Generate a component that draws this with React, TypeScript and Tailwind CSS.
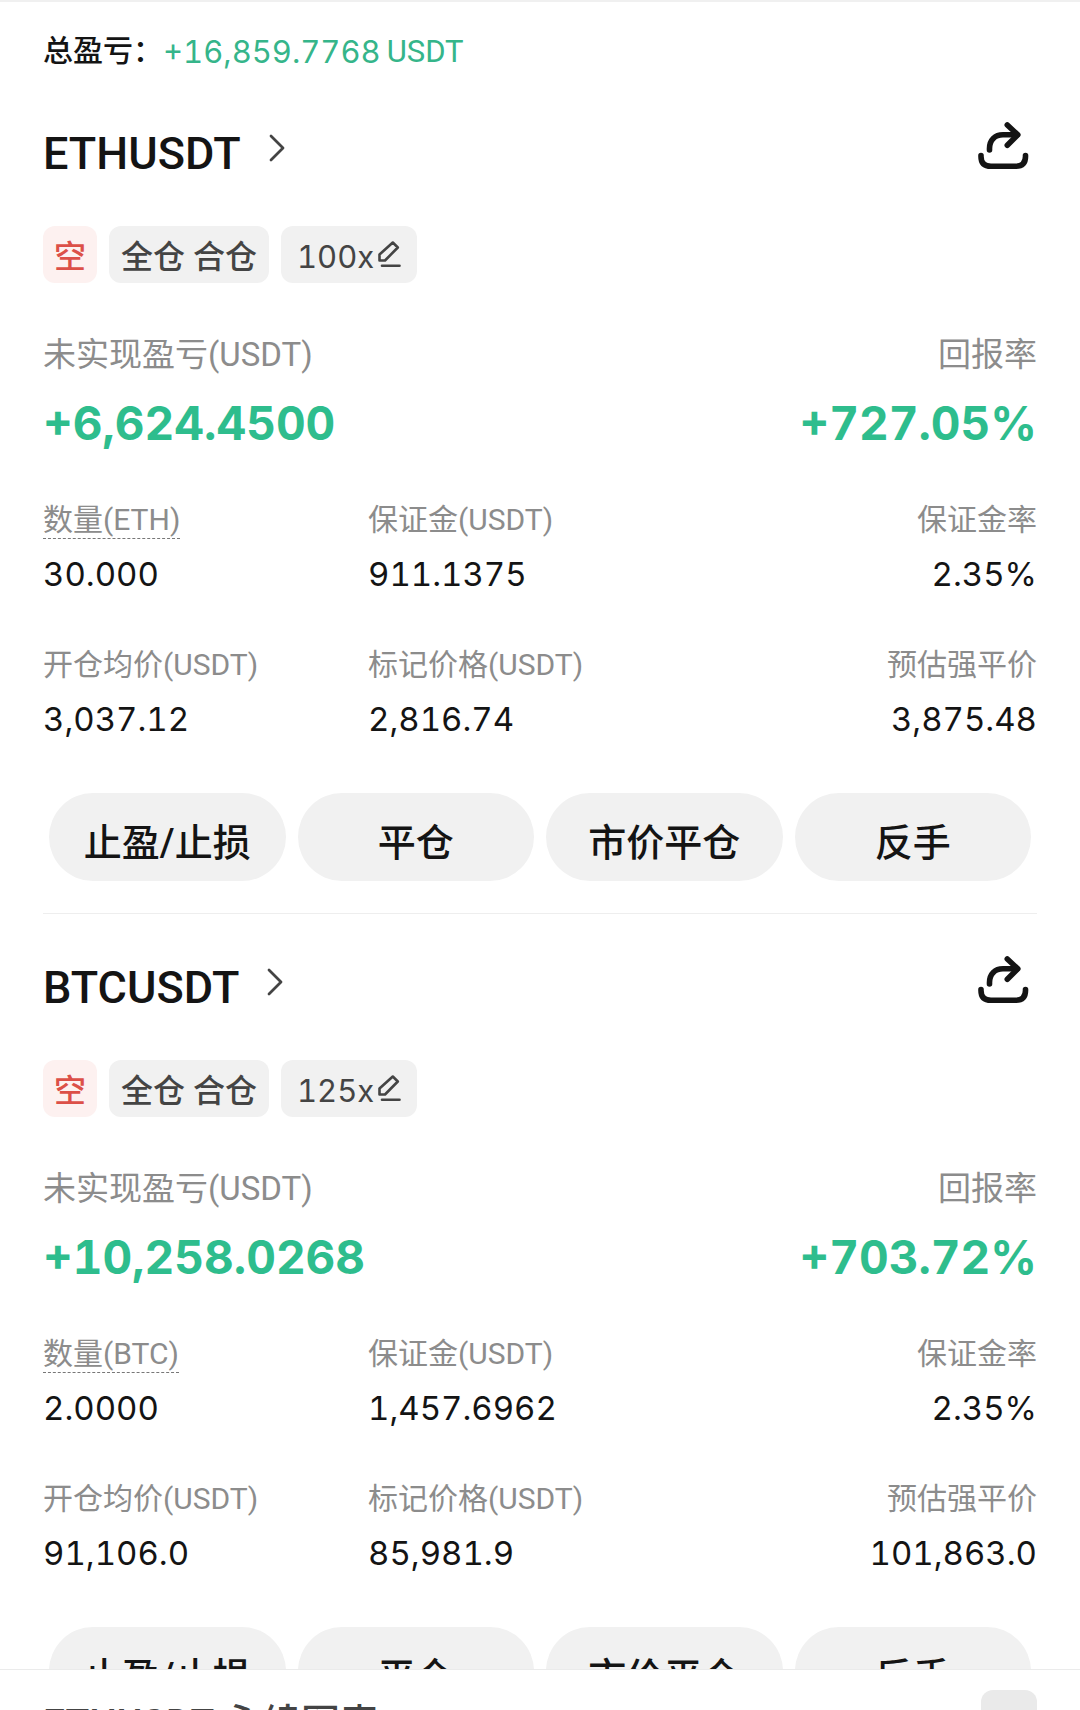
import clsx from "clsx"

interface Position {
    symbol: string
    coin: string
    leverage: string
    pnl: string
    roi: string
    amount: string
    margin: string
    marginRate: string
    entryPrice: string
    markPrice: string
    liqPrice: string
}

const positions: Position[] = [
    {
        symbol: "ETHUSDT",
        coin: "ETH",
        leverage: "100x",
        pnl: "+6,624.4500",
        roi: "+727.05%",
        amount: "30.000",
        margin: "911.1375",
        marginRate: "2.35%",
        entryPrice: "3,037.12",
        markPrice: "2,816.74",
        liqPrice: "3,875.48",
    },
    {
        symbol: "BTCUSDT",
        coin: "BTC",
        leverage: "125x",
        pnl: "+10,258.0268",
        roi: "+703.72%",
        amount: "2.0000",
        margin: "1,457.6962",
        marginRate: "2.35%",
        entryPrice: "91,106.0",
        markPrice: "85,981.9",
        liqPrice: "101,863.0",
    },
]

const actions = ["止盈/止损", "平仓", "市价平仓", "反手"]

const numFont = "font-['Inter','Noto_Sans_CJK_SC',sans-serif] tabular-nums"

function ShareIcon() {
    return (
        <svg viewBox="0 0 51 48" className="h-12 w-[51px]" fill="none" stroke="currentColor" strokeWidth="5.6" strokeLinecap="round" strokeLinejoin="round">
            <path d="M3 33.5v1c0 6.5 3.5 9.8 10 9.8h24.5c6.5 0 10-3.3 10-9.8v-1" />
            <path d="M11.5 28v-1.5c0-8.5 5.5-13.7 13.500-13.7h14" />
            <path d="M29.300 3l10.500 9.800-10.500 10.400" />
        </svg>
    )
}

function ChevronIcon() {
    return (
        <svg viewBox="0 0 16 28" className="h-7 w-4" fill="none" stroke="currentColor" strokeWidth="2.8" strokeLinecap="round" strokeLinejoin="round">
            <path d="M2 2l12 12L2 26" />
        </svg>
    )
}

function EditIcon() {
    return (
        <svg viewBox="0 0 23 27" className="h-[27px] w-[23px]" fill="none" stroke="currentColor" strokeWidth="2.6" strokeLinecap="round" strokeLinejoin="round">
            <path d="M1.500 19.500v-6L14.800 1.500l5 5L7 19.500z" />
            <path d="M4 24.800h17.500" />
        </svg>
    )
}

interface FieldProps {
    label: string
    value: string
    dashed?: boolean
    right?: boolean
}

function Field({ label, value, dashed, right }: FieldProps) {
    return (
        <div className={clsx("flex flex-col", right ? "items-end" : "items-start")}>
            <dt className={clsx("h-10 text-[30px] leading-[42px] text-[#8c8c8c]", dashed && "border-b border-dashed border-[#777777]")}>{label}</dt>
            <dd className={clsx(numFont, "mt-[15px] text-[33px] leading-[40px]")}>{value}</dd>
        </div>
    )
}

function PositionCard({ item }: { item: Position }) {
    return (
        <section className="mx-[43px] border-b border-[#eeeeee] pt-[42px] pb-8">
            <div className="flex items-start justify-between">
                <a href="#" className="flex items-start gap-7">
                    <h2 className="mt-2 text-[45px] leading-[48px] font-medium">{item.symbol}</h2>
                    <span className="mt-3 text-[#444444]"><ChevronIcon /></span>
                </a>
                <button type="button" aria-label="分享" className="mr-2"><ShareIcon /></button>
            </div>

            <div className="mt-12 flex h-[57px] gap-3 text-[32px] leading-none text-[#444444]">
                <span className="flex items-center rounded-xl bg-[#fdf1f0] px-[11px] pt-1 font-medium text-[#dc5048]">空</span>
                <span className="flex items-center rounded-xl bg-[#f1f1f1] px-3 pt-1 font-medium">全仓 合仓</span>
                <button type="button" className="flex items-center gap-1 rounded-xl bg-[#f1f1f1] px-4">
                    <span className={clsx(numFont, "pt-1 text-[31px]")}>{item.leverage}</span>
                    <EditIcon />
                </button>
            </div>

            <dl className="mt-12 flex justify-between">
                <div>
                    <dt className="text-[33px] leading-[48px] text-[#8c8c8c]">未实现盈亏(USDT)</dt>
                    <dd className={clsx(numFont, "mt-4 text-[46px] leading-[56px] font-bold text-[#2ebd8d]")}>{item.pnl}</dd>
                </div>
                <div className="text-right">
                    <dt className="text-[33px] leading-[48px] text-[#8c8c8c]">回报率</dt>
                    <dd className={clsx(numFont, "mt-4 text-[46px] leading-[56px] font-bold text-[#2ebd8d]")}>{item.roi}</dd>
                </div>
            </dl>

            <dl className="mt-12 grid grid-cols-[325px_1fr_auto] gap-y-[50px]">
                <Field label={`数量(${item.coin})`} value={item.amount} dashed />
                <Field label="保证金(USDT)" value={item.margin} />
                <Field label="保证金率" value={item.marginRate} right />
                <Field label="开仓均价(USDT)" value={item.entryPrice} />
                <Field label="标记价格(USDT)" value={item.markPrice} />
                <Field label="预估强平价" value={item.liqPrice} right />
            </dl>

            <div className="mt-[54px] grid grid-cols-4 gap-3 px-[6px]">
                {actions.map((name) => (
                    <button key={name} type="button" className="h-[88px] rounded-full bg-[#f1f1f1] pt-3 text-[38px] leading-none font-medium">{name}</button>
                ))}
            </div>
        </section>
    )
}

export default function App() {
    return (
        <div className="flex h-screen flex-col border-t-2 border-[#f0f0f0] bg-white font-['Roboto','Noto_Sans_CJK_SC',sans-serif] text-[#141414]">
            <main className="min-h-0 flex-1 overflow-hidden">
                <p className="flex h-[78px] items-center px-[43px] pt-5 text-[31px] leading-none">
                    <span className="text-[30px] font-medium">总盈亏：</span>
                    <span className="flex gap-1.5 text-[#35b58a]">
                        <span className={numFont}>+16,859.7768</span>
                        <span>USDT</span>
                    </span>
                </p>
                {positions.map((item) => (
                    <PositionCard key={item.symbol} item={item} />
                ))}
            </main>

            <footer className="flex h-[41px] shrink-0 items-start justify-between overflow-hidden border-t border-[#ebebeb] bg-white px-[43px]">
                <h3 className="mt-[26px] text-[39px] leading-[56px] font-medium text-[#444444]">ETHUSDT 永续图表</h3>
                <button type="button" aria-label="展开" className="mt-5 h-14 w-14 shrink-0 rounded-xl bg-[#eaeaea]"></button>
            </footer>
        </div>
    )
}
